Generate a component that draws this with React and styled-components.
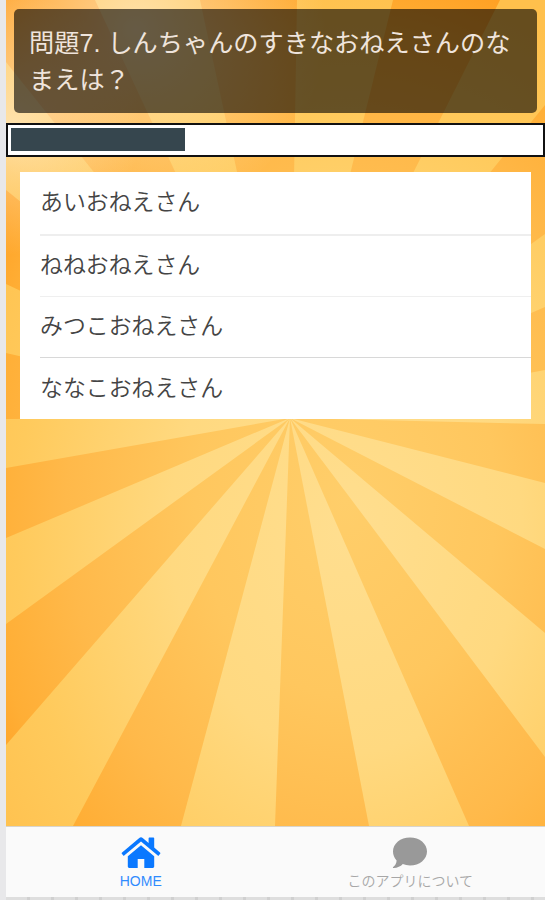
import styled, { createGlobalStyle } from 'styled-components';

const GlobalStyle = createGlobalStyle`
    * {
        box-sizing: border-box;
    }
    body {
        margin: 0;
        font-family: "Liberation Sans", "Noto Sans CJK JP", sans-serif;
    }
`

const Wrapper = styled.div`
    width: 545px;
    height: 900px;
    padding-left: 6px;
    display: flex;
    flex-direction: column;
    overflow: hidden;
    background-color: #e8e8ea;
`

const Screen = styled.main`
    position: relative;
    isolation: isolate;
    height: 826px;
    flex-shrink: 0;
    padding-top: 9px;
`

const Sunburst = styled.svg`
    position: absolute;
    inset: 0;
    z-index: -1;
    width: 100%;
    height: 100%;
`

const Question = styled.h1`
    width: 523px;
    height: 104px;
    margin: 0 0 10px 8px;
    padding: 16px 10px 0 15px;
    border-radius: 5px;
    background-color: rgba(0, 0, 0, 0.6);
    color: #efe4dc;
    font-size: 25.2px;
    font-weight: 400;
    line-height: 37px;
    word-break: break-all;
`

const Progress = styled.div`
    height: 34px;
    padding: 3px;
    border: 2px solid #111;
    background-color: #fff;
`

const ProgressBar = styled.div`
    width: 174px;
    height: 23px;
    background-color: #36464e;
`

const AnswerList = styled.ul`
    width: 511px;
    margin: 15px 0 0 14px;
    padding: 0;
    list-style: none;
    background-color: #fff;
`

const Answer = styled.li`
    height: 61.75px;
    padding-left: 20px;
`

const AnswerText = styled.div`
    height: 100%;
    padding-bottom: ${(props) => props.$isThick ? "6px" : "5px"};
    display: flex;
    align-items: center;
    border-top: ${(props) => props.$line ? `${props.$isThick ? 2 : 1}px solid ${props.$line}` : "none"};
    color: #444;
    font-size: 22.9px;
    font-weight: 350;
`

const TabBar = styled.nav`
    height: 71px;
    flex-shrink: 0;
    display: flex;
    border-top: 1px solid #d8d4cc;
    background-color: #fafafa;
`

const Tab = styled.div`
    width: 50%;
    padding-top: 10px;
    display: flex;
    flex-direction: column;
    align-items: center;
    color: ${(props) => props.$isSelected ? "#0a78ff" : "#999"};
`

const TabIcon = styled.svg`
    width: ${(props) => props.$width}px;
    height: 32px;
    flex-shrink: 0;
    fill: currentColor;
`

const TabLabel = styled.span`
    margin-top: 3px;
    font-size: 14px;
    font-weight: 350;
    line-height: 18px;
    opacity: 0.85;
`

const Footer = styled.div`
    height: 3px;
    background: repeating-linear-gradient(90deg, #dedede 0 21px, #d0d0d0 21px 24px);
`

const question = "問題7. しんちゃんのすきなおねえさんのなまえは？"

const answers = [
    { text: "あいおねえさん" },
    { text: "ねねおねえさん", line: "#eeeeee", isThick: true },
    { text: "みつこおねえさん", line: "#efefef" },
    { text: "ななこおねえさん", line: "#d8d8d8" }
]

// 集中線の濃い部分。中心(284, 418)から外側の2点まで
const rays = [
    "0,62 0,0 89,0",
    "194,0 291,0",
    "387,0 494,0",
    "539,105 539,234",
    "539,307 539,370",
    "539,424 539,483",
    "539,549 539,633",
    "539,757 539,826 463,826",
    "363,826 269,826",
    "175,826 67,826",
    "0,745 0,624",
    "0,538 0,468",
    "0,419 0,353",
    "0,284 0,190"
]

function SunburstBackground(){
    return <Sunburst viewBox="0 0 539 826" preserveAspectRatio="none">
        <defs>
            <radialGradient id="light" gradientUnits="userSpaceOnUse" cx="0" cy="0" r="1" gradientTransform="translate(340 530) scale(440 560)">
                <stop offset="0" stopColor="#ffde8f" />
                <stop offset="0.4" stopColor="#ffd980" />
                <stop offset="0.75" stopColor="#ffca5c" />
                <stop offset="1" stopColor="#ffc04c" />
            </radialGradient>
            <radialGradient id="dark" gradientUnits="userSpaceOnUse" cx="0" cy="0" r="1" gradientTransform="translate(340 500) scale(430 560)">
                <stop offset="0" stopColor="#ffce6a" />
                <stop offset="0.35" stopColor="#ffc75e" />
                <stop offset="0.65" stopColor="#ffb94a" />
                <stop offset="0.85" stopColor="#ffae35" />
                <stop offset="1" stopColor="#ff9c1e" />
            </radialGradient>
            <radialGradient id="glow" gradientUnits="userSpaceOnUse" cx="130" cy="30" r="190">
                <stop offset="0" stopColor="#fff4e0" stopOpacity="0.65" />
                <stop offset="0.5" stopColor="#fff1d0" stopOpacity="0.35" />
                <stop offset="1" stopColor="#fff1cc" stopOpacity="0" />
            </radialGradient>
            <radialGradient id="sideGlow" gradientUnits="userSpaceOnUse" cx="5" cy="125" r="130">
                <stop offset="0" stopColor="#fff4e0" stopOpacity="0.6" />
                <stop offset="1" stopColor="#fff1cc" stopOpacity="0" />
            </radialGradient>
        </defs>
        <rect width="539" height="826" fill="url(#light)" />
        {rays.map((points) => <polygon key={points} points={`284,418 ${points}`} fill="url(#dark)" />)}
        <rect width="539" height="826" fill="url(#glow)" />
        <rect width="539" height="826" fill="url(#sideGlow)" />
    </Sunburst>
}

function HomeIcon(){
    return <TabIcon $width={40} viewBox="0 0 40 32">
        <path d="M20 8.2 33.2 19.3V29.6Q33.2 31 31.8 31H23.3V22H16.7V31H8.2Q6.8 31 6.8 29.6V19.3Z" />
        <path d="M20 .2Q20.9.2 21.7.9L27.6 5.9V1.3Q27.6.5 28.4.5H32.4Q33.2.5 33.2 1.3V10.6L39.2 15.7Q39.7 16.1 39.3 16.6L37.8 18.4Q37.3 18.9 36.8 18.5L20 4.4 3.2 18.5Q2.7 18.9 2.2 18.4L.7 16.6Q.3 16.1.8 15.7L18.3.9Q19.1.2 20 .2Z" />
    </TabIcon>
}

function ChatIcon(){
    return <TabIcon $width={36} viewBox="0 0 36 32">
        <path d="M18 .5C27.6.5 35 6.7 35 14.5S27.6 28.5 18 28.5C15.4 28.5 13 28 10.8 27.1 8.6 29.6 5.1 31.1 1.4 31 .9 31 .7 30.4 1.2 30 3.2 28.5 4.5 26.4 4.6 23.5 2.3 21 1 17.9 1 14.5 1 6.7 8.4.5 18 .5Z" />
    </TabIcon>
}

function App(){
    return <Wrapper>
        <GlobalStyle />
        <Screen>
            <SunburstBackground />
            <Question>{question}</Question>
            <Progress>
                <ProgressBar />
            </Progress>
            <AnswerList>
                {answers.map(({ text, line, isThick }) => (
                    <Answer key={text}>
                        <AnswerText $line={line} $isThick={isThick}>{text}</AnswerText>
                    </Answer>
                ))}
            </AnswerList>
        </Screen>
        <TabBar>
            <Tab $isSelected>
                <HomeIcon />
                <TabLabel>HOME</TabLabel>
            </Tab>
            <Tab>
                <ChatIcon />
                <TabLabel>このアプリについて</TabLabel>
            </Tab>
        </TabBar>
        <Footer />
    </Wrapper>
}
export default App
